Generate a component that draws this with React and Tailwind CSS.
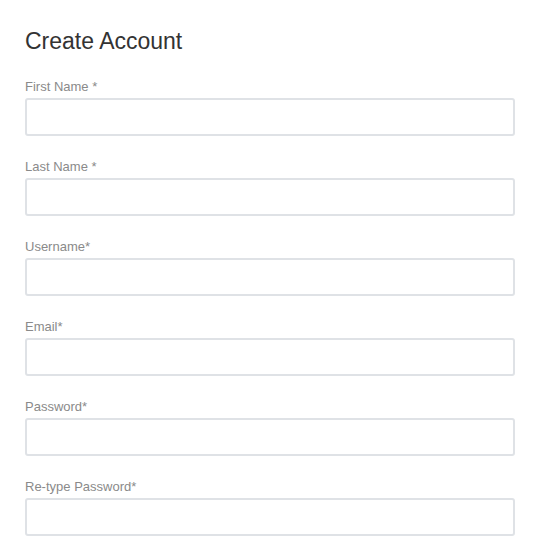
export default function App() {
  const fields = [
    "First Name *",
    "Last Name *",
    "Username*",
    "Email*",
    "Password*",
    "Re-type Password*",
  ];

  return (
    <div className="min-h-screen bg-white font-['Liberation_Sans',Arial,sans-serif]">
      <div className="w-[490px] ml-[25px] pt-[27px]">
        <h1 className="text-[23px] leading-[28px] text-[#333333]">Create Account</h1>
        <form className="mt-[24px] flex flex-col gap-[23px]">
          {fields.map((label) => (
            <div key={label} className="flex flex-col">
              <label className="text-[13px] leading-[15px] text-[#8a8a8a]">{label}</label>
              <input
                type={label.includes("Password") ? "password" : "text"}
                className="mt-[4px] h-[38px] w-full rounded-[3px] border-2 border-[#dfe2e6] bg-white px-2 outline-none"
              />
            </div>
          ))}
        </form>
      </div>
    </div>
  );
}
